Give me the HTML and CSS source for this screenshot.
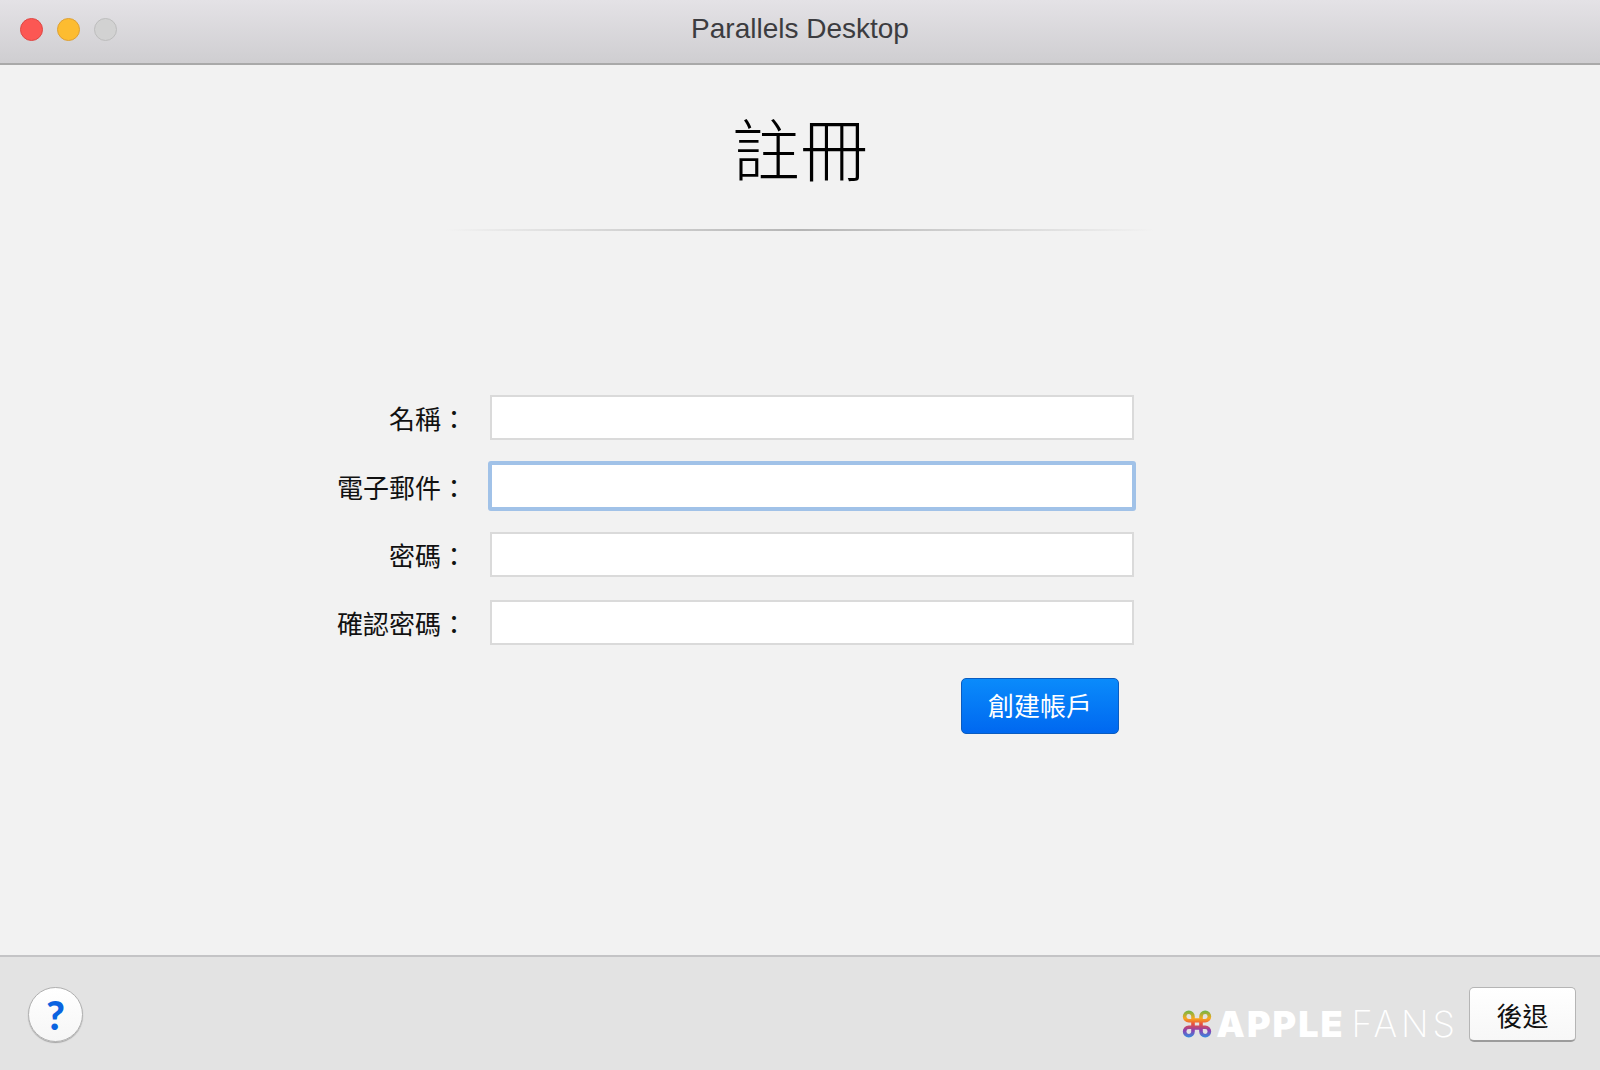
FILE: index.html
```html
<!DOCTYPE html>
<html lang="zh-Hant">
<head>
<meta charset="utf-8">
<title>Parallels Desktop</title>
<link rel="stylesheet" href="styles.css">
</head>
<body>
<div class="window">
  <header class="titlebar">
    <div class="lights">
      <span class="light light-close"></span>
      <span class="light light-min"></span>
      <span class="light light-zoom"></span>
    </div>
    <div class="window-title">Parallels Desktop</div>
  </header>
  <main class="content">
    <h1 class="heading">註冊</h1>
    <div class="divider"></div>
    <form class="form">
      <label class="field-label">名稱：</label>
      <input class="field" type="text">
      <label class="field-label">電子郵件：</label>
      <input class="field field-focus" type="text">
      <label class="field-label">密碼：</label>
      <input class="field" type="password">
      <label class="field-label">確認密碼：</label>
      <input class="field" type="password">
      <div class="form-actions">
        <button class="btn-primary" type="button">創建帳戶</button>
      </div>
    </form>
  </main>
  <footer class="footer">
    <button class="btn-help" type="button">?</button>
    <div class="footer-right">
      <div class="logo">
        <svg class="logo-mark" width="30" height="28" viewBox="0 0 30 28" fill="none">
          <defs>
            <linearGradient id="cmd" gradientUnits="userSpaceOnUse" x1="0" y1="0" x2="0" y2="28">
              <stop offset="0" stop-color="#62b84a"/>
              <stop offset="0.3" stop-color="#f7a81e"/>
              <stop offset="0.5" stop-color="#ea4f3c"/>
              <stop offset="0.72" stop-color="#8e3fb0"/>
              <stop offset="1" stop-color="#2b93e4"/>
            </linearGradient>
          </defs>
          <path d="M11 10H19V18H11ZM11 10V6.500A4.200 4.200 0 1 0 6.800 10.700H23.200A4.200 4.200 0 1 0 19 6.500V21.500A4.200 4.200 0 1 0 23.200 17.300H6.800A4.200 4.200 0 1 0 11 21.500Z" stroke="url(#cmd)" stroke-width="3.600"/>
        </svg>
        <span class="logo-apple">APPLE</span>
        <span class="logo-fans">FANS</span>
      </div>
      <button class="btn-back" type="button">後退</button>
    </div>
  </footer>
</div>
</body>
</html>
```
FILE: styles.css
```css
* { box-sizing: border-box; }
html, body { margin: 0; padding: 0; height: 100%; }
body {
  font-family: "Noto Sans CJK TC", "Liberation Sans", sans-serif;
  background: #f2f2f2;
  color: #111;
}
.window {
  width: 1600px;
  height: 1070px;
  display: flex;
  flex-direction: column;
  overflow: hidden;
}
.titlebar {
  height: 65px;
  flex: none;
  position: relative;
  display: flex;
  align-items: center;
  justify-content: center;
  background: linear-gradient(#e4e2e6, #cfced1);
  border-bottom: 2px solid #a9a9a9;
}
.lights {
  position: absolute;
  left: 20px;
  top: 18px;
  display: flex;
  gap: 14px;
}
.light {
  width: 23px;
  height: 23px;
  border-radius: 50%;
  border: 1px solid;
}
.light-close { background: #fc5753; border-color: #df4744; }
.light-min { background: #fdbc30; border-color: #dea034; }
.light-zoom { background: #d2d2d2; border-color: #bdbdbd; }
.window-title {
  font-family: "Liberation Sans", sans-serif;
  font-size: 28px;
  color: #3c3c40;
  margin-top: -6px;
}
.content {
  flex: 1;
  display: flex;
  flex-direction: column;
  align-items: center;
  min-height: 0;
}
.heading {
  margin: 38px 0 0;
  font-weight: 300;
  font-size: 68px;
  line-height: 88px;
  color: #000;
}
.divider {
  margin-top: 38px;
  width: 710px;
  height: 2px;
  flex: none;
  background: linear-gradient(90deg, rgba(170,170,170,0), #b5b5b5 50%, rgba(170,170,170,0));
}
.form {
  align-self: flex-start;
  margin: 164px 0 0 320px;
  display: grid;
  grid-template-columns: 147px 644px;
  column-gap: 23px;
  row-gap: 23px;
  align-items: center;
}
.field-label {
  text-align: right;
  font-size: 26px;
  font-weight: 400;
  line-height: 45px;
  color: #111;
}
.field {
  display: block;
  width: 644px;
  height: 45px;
  margin: 0;
  background: #fff;
  border: 2px solid #dadada;
  outline: none;
}
.field-focus {
  width: 648px;
  height: 50px;
  margin: -2px;
  border: 4px solid #a1c2e8;
  border-radius: 3px;
}
.form-actions {
  grid-column: 2;
  display: flex;
  justify-content: flex-end;
  padding-right: 15px;
  margin-top: 10px;
}
.btn-primary {
  width: 158px;
  height: 56px;
  padding: 0 0 4px;
  font-family: inherit;
  font-size: 26px;
  font-weight: 400;
  color: #fff;
  background: linear-gradient(#0a8bfb, #0068f0);
  border: 1px solid #0a5cc0;
  border-radius: 5px;
}
.footer {
  height: 115px;
  flex: none;
  display: flex;
  align-items: center;
  justify-content: space-between;
  padding: 2px 24px 0 28px;
  background: #e3e3e3;
  border-top: 2px solid #c4c4c6;
}
.btn-help {
  width: 55px;
  height: 55px;
  padding: 0;
  border-radius: 50%;
  background: linear-gradient(#fff, #f6f6f6);
  border: 1px solid #b0b0b0;
  box-shadow: 0 1px 1px #a5a5a5;
  color: #0a63e0;
  font-family: "Lato", sans-serif;
  font-weight: 900;
  font-size: 40px;
  line-height: 1;
}
.footer-right {
  display: flex;
  align-items: flex-end;
  gap: 14px;
}
.logo {
  display: flex;
  align-items: center;
  margin-bottom: -2px;
}
.logo-mark { flex: none; margin-right: 4px; }
.logo-apple {
  font-family: "Inter", sans-serif;
  font-weight: 900;
  font-size: 36px;
  line-height: 40px;
  color: #fff;
  letter-spacing: 2px;
}
.logo-fans {
  font-family: "Inter", sans-serif;
  font-weight: 200;
  font-size: 36px;
  line-height: 40px;
  color: #fff;
  margin-left: 7px;
  letter-spacing: 4px;
  margin-right: -4px;
}
.btn-back {
  width: 107px;
  height: 55px;
  padding: 0;
  font-family: inherit;
  font-size: 26px;
  font-weight: 400;
  color: #111;
  background: linear-gradient(#fff, #f7f7f7);
  border: 1px solid #b5b5b5;
  border-bottom: 2px solid #9c9c9c;
  border-radius: 5px;
}
```
